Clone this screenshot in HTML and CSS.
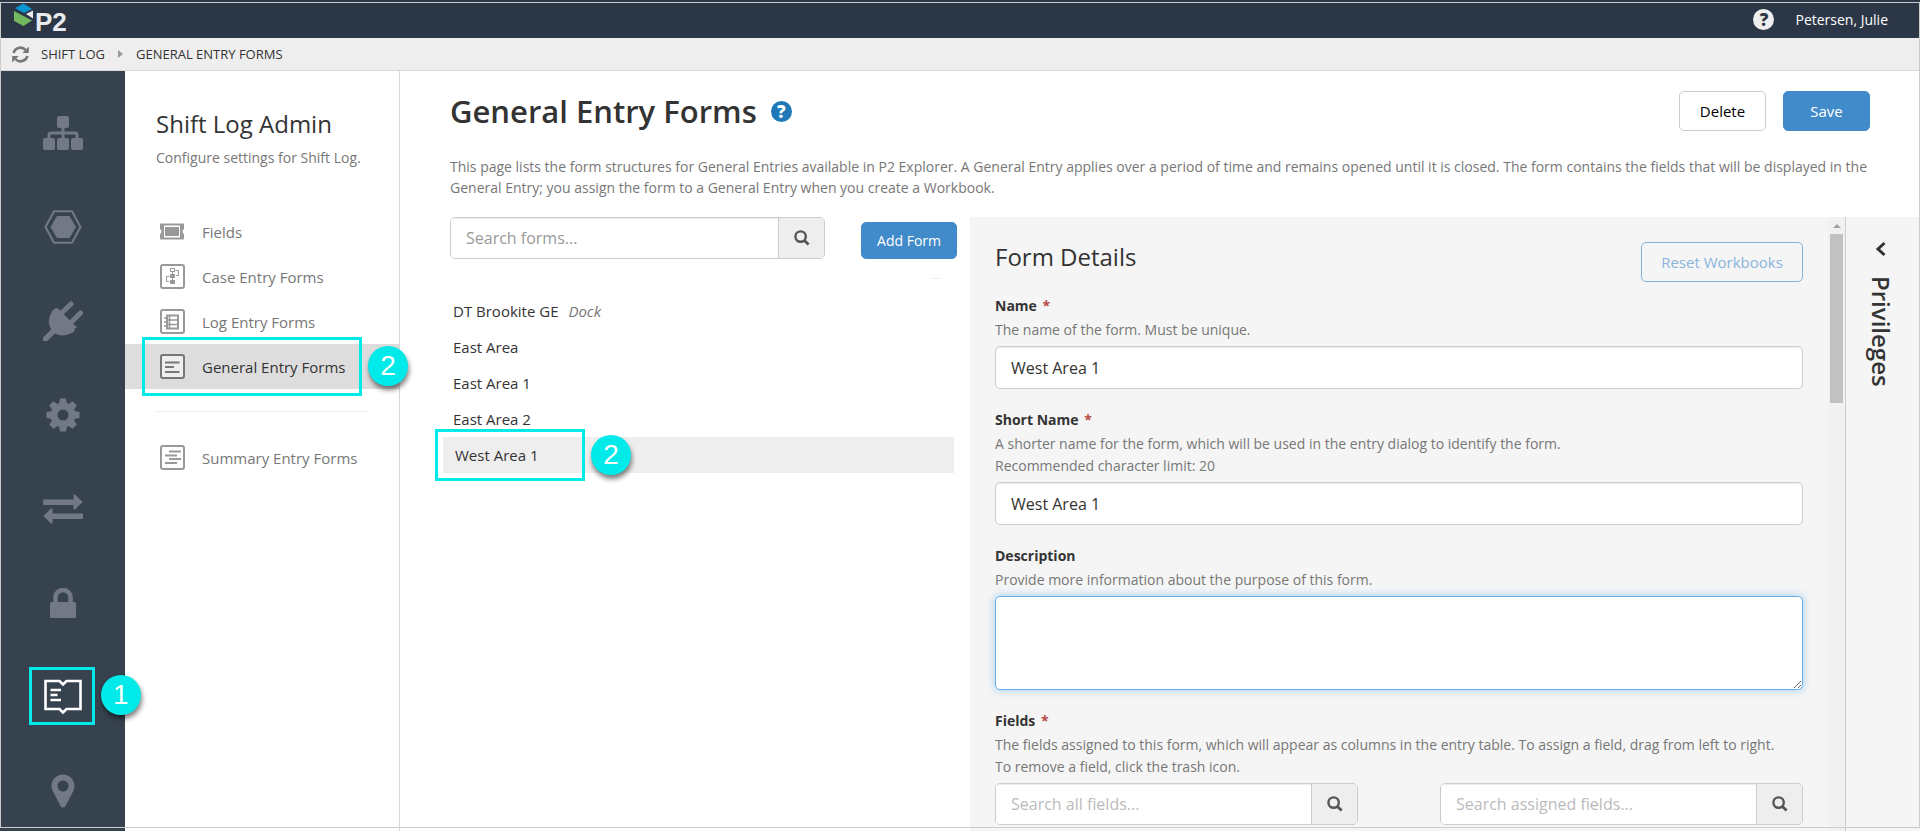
FILE: index.html
```html
<!DOCTYPE html>
<html lang="en">
  <head>
    <meta charset="UTF-8" />
    <meta name="viewport" content="width=device-width, initial-scale=1.0" />
    <title>General Entry Forms</title>

    <link rel="stylesheet" href="styles.css">
  </head>
  <body>
    <!-- icons used more than once -->
    <svg class="sprite" aria-hidden="true">
      <symbol id="icon-search" viewBox="0 0 16 16">
        <circle cx="6.6" cy="6.6" r="5.2" fill="none" stroke="currentColor" stroke-width="2.4" />
        <path d="M10.4 10.4L14.6 14.6" stroke="currentColor" stroke-width="2.8" />
      </symbol>
    </svg>

    <header class="topbar">
      <a href="#" class="logo" aria-label="P2 home">
        <svg width="22" height="24" viewBox="0 0 22 24">
          <path d="M10.500 0.500L19 6L11 10L2 5.200Z" fill="#0c96d6" />
          <path d="M1 8L19 17.500L10.500 23L1 18Z" fill="#73b860" />
          <path d="M13 11L20 7.500V15.500Z" fill="#e9ebee" />
        </svg>
        <span>P2</span>
      </a>
      <div class="user">
        <a href="#" class="help help-light" aria-label="Help">?</a>
        <a href="#">Petersen, Julie</a>
      </div>
    </header>

    <nav class="breadcrumb" aria-label="Breadcrumb">
      <button type="button" class="refresh" aria-label="Refresh">
        <svg width="17" height="17" viewBox="0 0 17 17" fill="none" stroke="#777" stroke-width="2.600">
          <path d="M1.600 7A7 7 0 0 1 13.600 4" />
          <path d="M15.400 10A7 7 0 0 1 3.400 13" />
          <path d="M16.800 0.500V7H10.300Z" fill="#777" stroke="none" />
          <path d="M0.200 16.500V10H6.700Z" fill="#777" stroke="none" />
        </svg>
      </button>
      <a href="#">SHIFT LOG</a>
      <span class="arrow"></span>
      <a href="#">GENERAL ENTRY FORMS</a>
    </nav>

    <div class="layout">
      <nav class="sidebar" aria-label="Modules">
        <a href="#" aria-label="Hierarchy">
          <svg width="40" height="34" viewBox="0 0 40 34" fill="currentColor">
            <rect x="14" y="0" width="12" height="12" rx="2" />
            <rect x="0" y="22" width="12" height="12" rx="2" />
            <rect x="14" y="22" width="12" height="12" rx="2" />
            <rect x="28" y="22" width="12" height="12" rx="2" />
            <path d="M20 11V23M6 23V19Q6 17 8 17H32Q34 17 34 19V23" fill="none" stroke="currentColor" stroke-width="3" />
          </svg>
        </a>
        <a href="#" aria-label="Entities">
          <svg width="38" height="34" viewBox="0 0 38 34" fill="currentColor">
            <path d="M10 1.200H28L36.500 17L28 32.800H10L1.500 17Z" fill="none" stroke="currentColor" stroke-width="2" />
            <path d="M13 6H25.500L32 17L25.500 28H13L6.500 17Z" />
          </svg>
        </a>
        <a href="#" aria-label="Connections">
          <svg width="40" height="40" viewBox="0 0 40 40" fill="currentColor">
            <path d="M2 38.500L10 30.500" stroke="currentColor" stroke-width="5.500" stroke-linecap="round" />
            <path d="M18 12.500L28 3M28 21.500L37.500 12" stroke="currentColor" stroke-width="5" stroke-linecap="round" />
            <path d="M14.500 7L34 26.500L31 28Q33 29.500 30 31.500Q17 38 9 30Q2.500 20 9 10.500Q11 7 14.500 7Z" />
          </svg>
        </a>
        <a href="#" aria-label="Settings">
          <svg width="34" height="34" viewBox="0 0 34 34">
            <g fill="currentColor">
              <path id="tooth" d="M13 6L14 0.500H20L21 6V28L20 33.500H14L13 28Z" />
              <use href="#tooth" transform="rotate(45 17 17)" />
              <use href="#tooth" transform="rotate(90 17 17)" />
              <use href="#tooth" transform="rotate(135 17 17)" />
              <circle cx="17" cy="17" r="12.500" />
            </g>
            <circle cx="17" cy="17" r="5.500" fill="#36434f" />
          </svg>
        </a>
        <a href="#" aria-label="Transfers">
          <svg width="40" height="30" viewBox="0 0 40 30" fill="currentColor">
            <path d="M1 5.500H30.500V0.500H32L39.500 8L32 15.500H30.500V11H1Q0 11 0 10V6.500Q0 5.500 1 5.500Z" />
            <path d="M39 19.500H9.500V14.500H8L0.500 22L8 29.500H9.500V25H39Q40 25 40 24V20.500Q40 19.500 39 19.500Z" />
          </svg>
        </a>
        <a href="#" aria-label="Security">
          <svg width="26" height="30" viewBox="0 0 26 30" fill="currentColor">
            <rect x="0" y="14" width="26" height="16" rx="1.500" />
            <path d="M5.500 15V9.500A7.500 7.500 0 0 1 20.500 9.500V15" fill="none" stroke="currentColor" stroke-width="4.500" />
          </svg>
        </a>
        <a href="#" class="active" aria-label="Shift Log">
          <svg width="38" height="36" viewBox="0 0 38 36" fill="none" stroke="currentColor">
            <path d="M1.500 2H15.500L19 5.500L22.500 2H36.500V30H22.500L19 33.500L15.500 30H1.500Z" stroke-width="2.600" />
            <path d="M6.500 11H17M6.500 16H13.500M6.500 21H17" stroke-width="2.600" />
          </svg>
          <span class="callout callout-module"></span>
          <span class="step step-module">1</span>
        </a>
        <a href="#" aria-label="Locations">
          <svg width="24" height="34" viewBox="0 0 24 34" fill="currentColor" fill-rule="evenodd">
            <path d="M12 0.500C18.500 0.500 23.500 5.500 23.500 12Q23.500 14.500 22 17.500L14.500 32Q13.500 33.500 12 33.500T9.500 32L2 17.500Q0.500 14.500 0.500 12C0.500 5.500 5.500 0.500 12 0.500ZM12 6.500A5.500 5.500 0 1 0 12 17.500A5.500 5.500 0 1 0 12 6.500Z" />
          </svg>
        </a>
      </nav>

      <aside class="subnav">
        <h2>Shift Log Admin</h2>
        <p>Configure settings for Shift Log.</p>
        <ul>
          <li>
            <a href="#">
              <svg width="25" height="25" viewBox="0 0 25 25" fill="currentColor">
                <path fill-rule="evenodd" d="M1 4.500H23Q24 4.500 24 5.500V10Q22.500 10.500 22.500 12.500T24 15V19.500Q24 20.500 23 20.500H1Q0 20.500 0 19.500V15Q1.500 14.500 1.500 12.500T0 10V5.500Q0 4.500 1 4.500ZM4 6.500V18.500H20V6.500Z" />
                <rect x="5" y="8" width="14" height="9" />
              </svg>
              Fields
            </a>
          </li>
          <li>
            <a href="#">
              <svg width="25" height="25" viewBox="0 0 25 25" fill="none" stroke="currentColor">
                <rect x="1" y="1" width="23" height="23" rx="2" stroke-width="2" />
                <rect x="10.500" y="4.500" width="4" height="3" />
                <path d="M15.500 6.500H18.500V11.500H16M9.500 12.500H6.500V17.500H9" />
                <path d="M10 10H15V14H10ZM10 16H15V20H10Z" fill="currentColor" stroke="none" />
                <path d="M12.500 8V16" />
              </svg>
              Case Entry Forms
            </a>
          </li>
          <li>
            <a href="#">
              <svg width="25" height="25" viewBox="0 0 25 25" fill="none" stroke="currentColor">
                <rect x="1" y="1" width="23" height="23" rx="2" stroke-width="2" />
                <rect x="7" y="6.500" width="11" height="13" stroke-width="2" />
                <path d="M9.500 6V20M7 11H18M7 15.500H18M4 9H7M4 13H7M4 17H7" stroke-width="1.500" />
              </svg>
              Log Entry Forms
            </a>
          </li>
          <li class="active">
            <a href="#">
              <svg width="25" height="25" viewBox="0 0 25 25" fill="none" stroke="currentColor" stroke-width="2">
                <rect x="1" y="1" width="23" height="23" rx="2" fill="#eee" />
                <path d="M5 8.500H19.500M5 13H14M5 18H19.500" />
              </svg>
              General Entry Forms
            </a>
            <span class="callout callout-menu"></span>
            <span class="step step-menu">2</span>
          </li>
        </ul>
        <hr />
        <ul>
          <li>
            <a href="#">
              <svg width="25" height="25" viewBox="0 0 25 25" fill="none" stroke="currentColor" stroke-width="2">
                <rect x="1" y="1" width="23" height="23" rx="2" />
                <path d="M9 6.500H21M5 10.500H17M9 14H21M5 18H17" />
              </svg>
              Summary Entry Forms
            </a>
          </li>
        </ul>
      </aside>

      <main class="content">
        <div class="page-head">
          <div class="title-row">
            <h1>General Entry Forms</h1>
            <a href="#" class="help" aria-label="About this page">?</a>
            <div class="actions">
              <button type="button" class="btn">Delete</button>
              <button type="button" class="btn btn-primary">Save</button>
            </div>
          </div>
          <p>
            This page lists the form structures for General Entries available in P2 Explorer. A General Entry applies over a period of time and remains opened until it is closed. The form contains the fields that will be displayed in the General Entry; you assign the form to a General Entry when you create a Workbook.
          </p>
        </div>

        <div class="workspace">
          <section class="forms">
            <div class="forms-bar">
              <div class="search">
                <input type="text" placeholder="Search forms..." aria-label="Search forms" />
                <button type="button" aria-label="Search"><svg width="16" height="16"><use href="#icon-search" /></svg></button>
              </div>
              <button type="button" class="btn btn-primary btn-add">Add Form</button>
            </div>
            <ul class="form-list">
              <li><a href="#">DT Brookite GE <em>Dock</em></a></li>
              <li><a href="#">East Area</a></li>
              <li><a href="#">East Area 1</a></li>
              <li><a href="#">East Area 2</a></li>
              <li class="selected">
                <a href="#">West Area 1</a>
                <span class="callout callout-form"></span>
                <span class="step step-form">2</span>
              </li>
            </ul>
          </section>

          <form class="details">
            <div class="details-head">
              <h2>Form Details</h2>
              <button type="button" class="btn btn-outline">Reset Workbooks</button>
            </div>

            <div class="field">
              <label for="form-name">Name <span class="required">*</span></label>
              <p>The name of the form. Must be unique.</p>
              <input type="text" id="form-name" value="West Area 1" />
            </div>

            <div class="field">
              <label for="short-name">Short Name <span class="required">*</span></label>
              <p>A shorter name for the form, which will be used in the entry dialog to identify the form.<br />Recommended character limit: 20</p>
              <input type="text" id="short-name" value="West Area 1" />
            </div>

            <div class="field">
              <label for="description">Description</label>
              <p>Provide more information about the purpose of this form.</p>
              <textarea id="description" class="focused"></textarea>
            </div>

            <div class="field">
              <label for="all-fields">Fields <span class="required">*</span></label>
              <p>The fields assigned to this form, which will appear as columns in the entry table. To assign a field, drag from left to right.<br />To remove a field, click the trash icon.</p>
              <div class="field-columns">
                <div class="search">
                  <input type="text" id="all-fields" placeholder="Search all fields..." />
                  <button type="button" aria-label="Search all fields"><svg width="16" height="16"><use href="#icon-search" /></svg></button>
                </div>
                <div class="search">
                  <input type="text" placeholder="Search assigned fields..." aria-label="Search assigned fields" />
                  <button type="button" aria-label="Search assigned"><svg width="16" height="16"><use href="#icon-search" /></svg></button>
                </div>
              </div>
            </div>
          </form>

          <div class="scrollbar" aria-hidden="true">
            <span class="scroll-up"></span>
            <span class="thumb"></span>
          </div>

          <aside class="privileges">
            <button type="button" aria-label="Open privileges">
              <svg width="12" height="16" viewBox="0 0 12 16" fill="none" stroke="currentColor" stroke-width="3">
                <path d="M9.500 2L3 8L9.500 14" />
              </svg>
            </button>
            <h2>Privileges</h2>
          </aside>
        </div>
      </main>
    </div>
  </body>
</html>
```

FILE: styles.css
```css
* {
  box-sizing: border-box;
}

:root {
  --main-color: #428bca;
  --callout: #00eaea;
  --nav-bg: #36434f;
  --topbar-bg: #2b3746;
  --panel-bg: #f5f5f5;
  --line: #ccc;
  --text: #333;
  --muted: #777;
}

body {
  margin: 0;
  height: 100vh;
  display: flex;
  flex-direction: column;
  overflow: hidden;
  font-family: "Open Sans", "Noto Sans", sans-serif;
  font-size: 14px;
  color: var(--text);
  background: #fff;
}

/* thin frame around the application window */
body::after {
  content: "";
  position: fixed;
  inset: 2px 0 3px;
  border: 1px solid var(--line);
  pointer-events: none;
}

a {
  color: inherit;
  text-decoration: none;
}

ul {
  list-style: none;
  margin: 0;
  padding: 0;
}

h1,
h2,
p {
  margin: 0;
}

button,
input,
textarea {
  font-family: inherit;
  color: inherit;
}

button {
  cursor: pointer;
}

.sprite {
  display: none;
}

/* top bar */
.topbar {
  flex: none;
  height: 38px;
  padding: 0 32px 0 13px;
  display: flex;
  justify-content: space-between;
  align-items: center;
  background: var(--topbar-bg);
  color: #fff;
}

.logo {
  display: flex;
  align-items: flex-start;
  height: 38px;
  padding-top: 3px;
}

.logo span {
  padding-top: 3px;
  font: bold 26px/32px "Liberation Sans", sans-serif;
  color: #e9ebee;
}

.user {
  display: flex;
  align-items: center;
  gap: 21px;
}

.help {
  width: 21px;
  height: 21px;
  border-radius: 50%;
  background: #1f78b8;
  color: #fff;
  font-size: 17px;
  line-height: 21px;
  font-weight: 800;
  text-align: center;
}

.help-light {
  background: #eee;
  color: var(--topbar-bg);
}

.breadcrumb {
  flex: none;
  height: 33px;
  padding-left: 12px;
  display: flex;
  align-items: center;
  border-bottom: 1px solid #d8d8d8;
  background: #eee;
  font-size: 13px;
}

.refresh {
  display: flex;
  padding: 0;
  margin-right: 12px;
  border: none;
  background: none;
}

.arrow {
  margin: 0 13px;
  border: 4px solid transparent;
  border-left: 5px solid #999;
  border-right: none;
}

/* layout */
.layout {
  flex: 1;
  min-height: 0;
  display: flex;
}

.sidebar {
  flex: none;
  width: 125px;
  padding-top: 15px;
  background: var(--nav-bg);
  color: #727985;
}

.sidebar a {
  position: relative;
  height: 94px;
  display: flex;
  justify-content: center;
  align-items: center;
}

.sidebar .active {
  color: #fff;
}

.subnav {
  flex: none;
  width: 275px;
  padding-top: 36px;
  border-right: 1px solid #d8d8d8;
  color: var(--muted);
}

.subnav h2 {
  padding-left: 31px;
  font-size: 24px;
  line-height: 34px;
  font-weight: 400;
  color: var(--text);
}

.subnav p {
  padding-left: 31px;
  margin: 6px 0 40px;
  line-height: 22px;
}

.subnav li {
  position: relative;
}

.subnav li a {
  height: 45px;
  padding-left: 35px;
  display: flex;
  align-items: center;
  gap: 17px;
  font-size: 15px;
}

.subnav svg {
  color: #999;
}

.subnav .active {
  background: #ddd;
  color: var(--text);
}

.subnav .active svg {
  color: #777;
}

.subnav hr {
  margin: 22px 31px 23px;
  border: none;
  border-top: 1px solid #eee;
}

.content {
  flex: 1;
  min-width: 0;
  display: flex;
  flex-direction: column;
}

.page-head {
  padding: 20px 30px 19px 50px;
}

.title-row {
  display: flex;
  align-items: center;
  height: 40px;
  padding-right: 20px;
}

.title-row h1 {
  font-size: 31px;
  line-height: 40px;
  font-weight: 600;
  margin-right: 14px;
}

.actions {
  margin-left: auto;
  display: flex;
  gap: 17px;
}

.page-head p {
  margin-top: 25px;
  line-height: 21px;
  color: var(--muted);
}

.btn {
  height: 40px;
  min-width: 87px;
  padding: 0 14px;
  border: 1px solid var(--line);
  border-radius: 5px;
  background: #fff;
  color: #000;
  font-size: 15px;
}

.btn-primary {
  border-color: var(--main-color);
  background: var(--main-color);
  color: #fff;
}

.btn-outline {
  border-color: #7fb2dd;
  background: transparent;
  color: #8ab4dc;
}

/* list of forms */
.workspace {
  flex: 1;
  min-height: 0;
  display: flex;
}

.forms {
  flex: none;
  width: 570px;
  padding: 0 13px 0 50px;
}

.forms-bar {
  display: flex;
  justify-content: space-between;
  align-items: flex-end;
}

.forms-bar .search {
  width: 375px;
}

.btn-add {
  height: 37px;
  padding: 0 15px;
  font-size: 14px;
}

.search {
  display: flex;
  height: 42px;
  border: 1px solid var(--line);
  border-radius: 5px;
  overflow: hidden;
  background: #fff;
}

.search input {
  flex: 1;
  min-width: 0;
  padding: 0 15px;
  border: none;
  box-shadow: inset 0 1px 1px rgba(0, 0, 0, 0.08);
  font-size: 16px;
}

.search input::placeholder {
  color: #999;
}

.search button {
  width: 46px;
  padding: 0;
  display: flex;
  justify-content: center;
  align-items: center;
  border: none;
  border-left: 1px solid var(--line);
  background: #eee;
  color: #555;
}

.form-list {
  margin: 19px 3px 0 -7px;
  font-size: 15px;
}

.form-list::before {
  content: "";
  display: block;
  width: 9px;
  height: 1px;
  margin: 0 13px 14px auto;
  background: #eee;
}

.form-list li {
  position: relative;
}

.form-list a {
  display: block;
  padding-left: 10px;
  line-height: 36px;
}

.form-list em {
  margin-left: 6px;
  color: var(--muted);
}

.form-list .selected {
  background: #eee;
}

.form-list .selected a {
  padding-left: 12px;
}

/* form details */
.details {
  flex: 1;
  min-width: 0;
  padding: 25px 25px 0;
  overflow: hidden;
  background: var(--panel-bg);
}

.details-head {
  display: flex;
  justify-content: space-between;
  margin-bottom: 13px;
}

.details-head h2 {
  font-size: 24px;
  line-height: 30px;
  font-weight: 400;
}

.details-head .btn {
  width: 162px;
}

.field {
  margin-bottom: 20px;
}

.field label {
  display: block;
  margin-bottom: 2px;
  line-height: 22px;
  font-weight: 700;
}

.required {
  margin-left: 2px;
  color: #b94a48;
}

.field p {
  margin-bottom: 5px;
  line-height: 22px;
  color: var(--muted);
}

.field > input,
.field textarea {
  display: block;
  width: 100%;
  height: 43px;
  padding: 0 15px;
  border: 1px solid var(--line);
  border-radius: 5px;
  background: #fff;
  box-shadow: inset 0 1px 1px rgba(0, 0, 0, 0.08);
  font-size: 16px;
}

.field textarea {
  height: 94px;
}

.field .focused {
  border-color: #66afe9;
  box-shadow: 0 0 8px rgba(102, 175, 233, 0.6);
}

.field-columns {
  display: grid;
  grid-template-columns: 1fr 1fr;
  gap: 82px;
}

.field-columns .search input::placeholder {
  color: #bbb;
}

.scrollbar {
  flex: none;
  width: 17px;
  padding: 7px 2px 0;
  background: #f1f1f1;
}

.scroll-up {
  display: block;
  width: 8px;
  margin: 0 auto 6px;
  border: 4px solid transparent;
  border-top: none;
  border-bottom-color: #a3a3a3;
}

.thumb {
  display: block;
  height: 169px;
  background: #c1c1c1;
}

.privileges {
  flex: none;
  width: 75px;
  padding: 24px 4px 0 0;
  display: flex;
  flex-direction: column;
  align-items: center;
  gap: 19px;
  border-left: 1px solid var(--line);
  background: var(--panel-bg);
}

.privileges button {
  display: flex;
  padding: 0;
  border: none;
  background: none;
}

.privileges h2 {
  writing-mode: vertical-rl;
  font-size: 24px;
  line-height: 30px;
  font-weight: 600;
}

/* numbered callouts */
.callout {
  position: absolute;
  border: 3px solid var(--callout);
}

.step {
  position: absolute;
  width: 40px;
  height: 40px;
  border-radius: 50%;
  background: var(--callout);
  box-shadow: 1px 4px 5px rgba(0, 0, 0, 0.5);
  color: #fff;
  font: 28px/40px "Liberation Sans", sans-serif;
  text-align: center;
}

.callout-module {
  inset: 17px 30px 19px 29px;
}

.step-module {
  top: 25px;
  left: 101px;
  z-index: 1;
}

.callout-menu {
  inset: -7px 37px -7px 17px;
}

.step-menu {
  top: 2px;
  right: -9px;
}

.callout-form {
  top: -8px;
  bottom: -8px;
  left: -8px;
  width: 150px;
}

.step-form {
  top: -2px;
  left: 148px;
}
```
